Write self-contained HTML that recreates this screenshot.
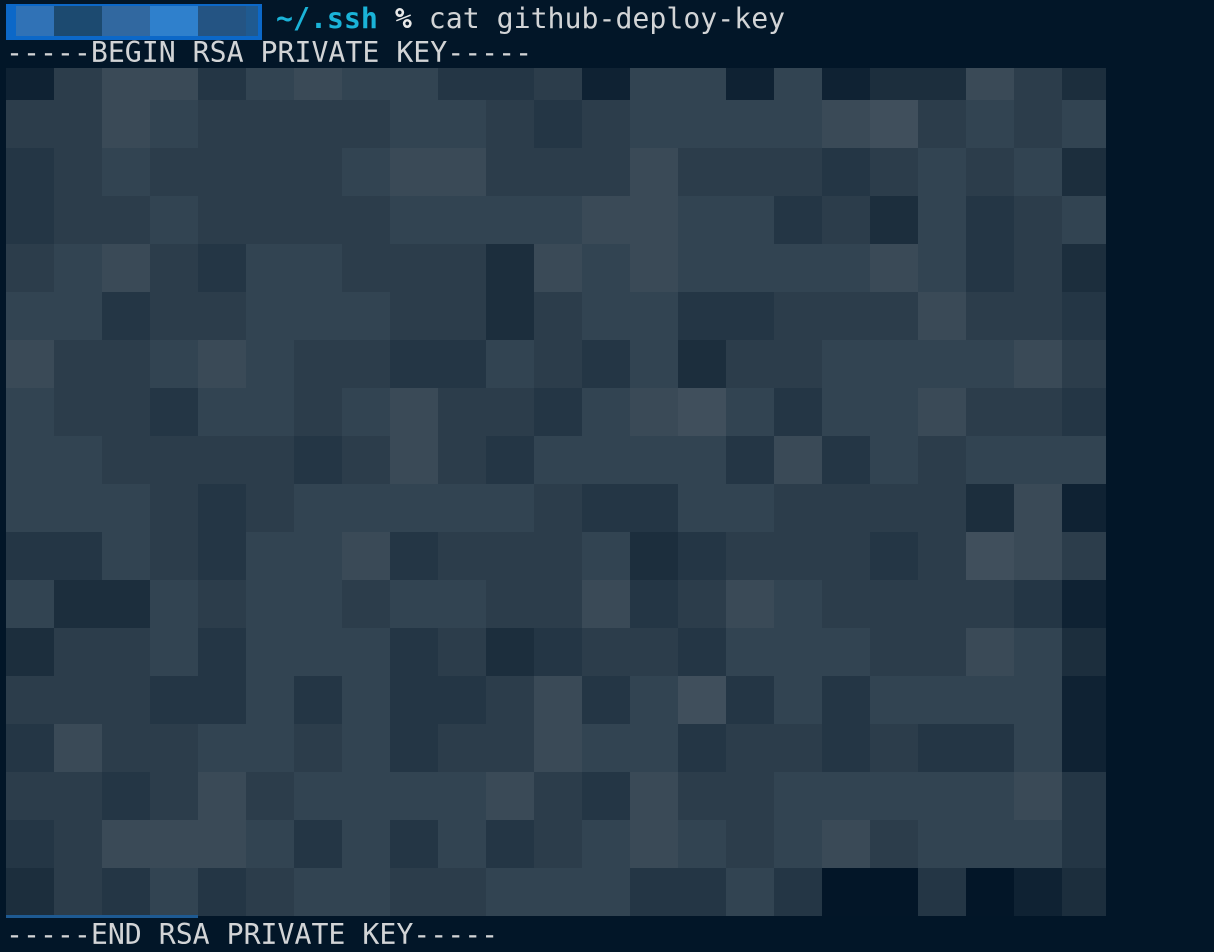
<!DOCTYPE html>
<html><head><style>
body{margin:0;width:1214px;height:952px;background:#021628;overflow:hidden;position:relative;font-family:"DejaVu Sans Mono","Liberation Mono",monospace;font-size:28.2px;color:#d2d4d6}
.t{position:absolute;left:6px;white-space:pre;line-height:34px}
#g{position:absolute;left:6px;top:68px;width:1100px;height:848px;overflow:hidden}
#g div{position:absolute;width:48px;height:48px}
.sel{position:absolute;left:6px;top:4px;width:256px;height:36px;background:#0c68c8}
.sel div{position:absolute;top:2px;height:30px}
</style></head><body>
<div class="sel">
<div style="left:10px;width:38px;background:#3072b6"></div>
<div style="left:48px;width:48px;background:#1c4a70"></div>
<div style="left:96px;width:48px;background:#3168a0"></div>
<div style="left:144px;width:48px;background:#2f80cc"></div>
<div style="left:192px;width:48px;background:#245483"></div>
<div style="left:240px;width:12px;background:#1f5a90"></div>
</div>
<div class="t" style="left:276px;top:2px"><b style="color:#1ab3d8">~/.ssh</b> <b style="color:#e8e8e8">%</b> cat github-deploy-key</div>
<div class="t" style="top:36px">-----BEGIN RSA PRIVATE KEY-----</div>
<div id="g"></div>
<div style="position:absolute;left:6px;top:915px;width:192px;height:3px;background:#1e5a92"></div>
<div class="t" style="top:918px">-----END RSA PRIVATE KEY-----</div>
<script>
var P={a:"#0f2233",b:"#1c2e3d",c:"#243645",d:"#2c3d4b",e:"#324452",f:"#3a4a57",g:"#404f5c",z:"#031628"};
var R=["adffcefeeccdaeeaeabbfdb","ddfeddddeedcdeeeefgdede","cdeddddeffdddfdddcdedeb","cddeddddeeeeffeecdbecde","defdceedddbfefeeeefecdb","eecddeeeddbdeeccdddfddc","fddefeddccedcebddeeeefd","eddceedefddcefgeceefddc","eeddddcdfdceeeecfcedeee","eeedcdeeeeedcceeddddbfa","ccedceefcdddebcdddcdgfd","ebbedeedeeddfcdfeddddca","bddeceeecdbcddceeeddfeb","dddccececcdfcegceceeeea","cfddeedecddfeecddcdccea","ddcdfdeeeefdcfddeeeeefc","cdfffecececdefedefdeeec","bdcecdeeddeeecceczzczab"];
var h="";R.forEach(function(r,i){var y=i==0?0:32+(i-1)*48,hh=i==0?32:48;for(var j=0;j<23;j++)h+='<div style="left:'+j*48+'px;top:'+y+'px;height:'+hh+'px;background:'+P[r[j]]+'"></div>';});
document.getElementById("g").innerHTML=h;
</script>
</body></html>
